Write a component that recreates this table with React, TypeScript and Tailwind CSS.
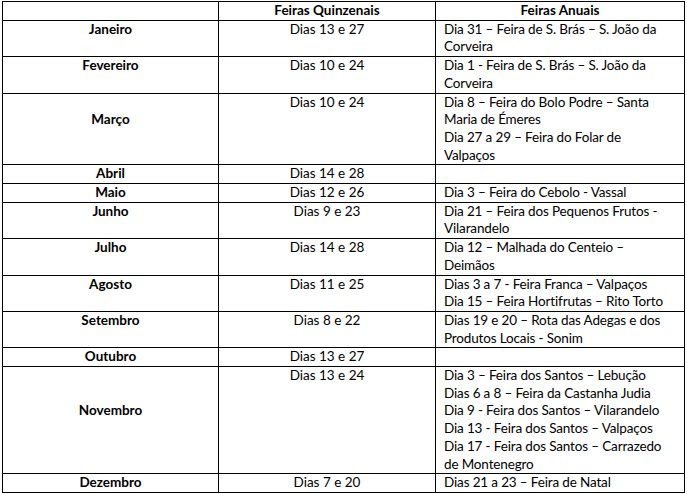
import React from 'react';

type Row = {
  month: string;
  quinzenais: string;
  anuais: string[];
  monthPad?: string;
};

// each entry in anuais is one printed line of the cell
const rows: Row[] = [
  { month: 'Janeiro', quinzenais: 'Dias 13 e 27', anuais: ['Dia 31 – Feira de S. Brás – S. João da', 'Corveira'] },
  { month: 'Fevereiro', quinzenais: 'Dias 10 e 24', anuais: ['Dia 1 - Feira de S. Brás – S. João da', 'Corveira'] },
  {
    month: 'Março',
    quinzenais: 'Dias 10 e 24',
    anuais: ['Dia 8 – Feira do Bolo Podre – Santa', 'Maria de Émeres', 'Dia 27 a 29 – Feira do Folar de', 'Valpaços'],
    monthPad: 'pt-[17.7px]'
  },
  { month: 'Abril', quinzenais: 'Dias 14 e 28', anuais: [] },
  { month: 'Maio', quinzenais: 'Dias 12 e 26', anuais: ['Dia 3 – Feira do Cebolo - Vassal'] },
  { month: 'Junho', quinzenais: 'Dias 9 e 23', anuais: ['Dia 21 – Feira dos Pequenos Frutos -', 'Vilarandelo'] },
  { month: 'Julho', quinzenais: 'Dias 14 e 28', anuais: ['Dia 12 – Malhada do Centeio –', 'Deimãos'] },
  {
    month: 'Agosto',
    quinzenais: 'Dias 11 e 25',
    anuais: ['Dias 3 a 7 - Feira Franca – Valpaços', 'Dia 15 – Feira Hortifrutas – Rito Torto']
  },
  { month: 'Setembro', quinzenais: 'Dias 8 e 22', anuais: ['Dias 19 e 20 – Rota das Adegas e dos', 'Produtos Locais - Sonim'] },
  { month: 'Outubro', quinzenais: 'Dias 13 e 27', anuais: [] },
  {
    month: 'Novembro',
    quinzenais: 'Dias 13 e 24',
    anuais: [
      'Dia 3 – Feira dos Santos – Lebução',
      'Dias 6 a 8 – Feira da Castanha Judia',
      'Dia 9 - Feira dos Santos – Vilarandelo',
      'Dia 13 - Feira dos Santos – Valpaços',
      'Dia 17 - Feira dos Santos – Carrazedo',
      'de Montenegro'
    ],
    monthPad: 'pt-[35.4px]'
  },
  { month: 'Dezembro', quinzenais: 'Dias 7 e 20', anuais: ['Dias 21 a 23 – Feira de Natal'] }
];

export default function App() {
  return (
    <div className="w-[687px] h-[494px] bg-white pt-[1px] pl-[2px] font-['Lato','Liberation_Sans',sans-serif] text-[13.5px] leading-[17.7px] text-black">
      <table className="border-collapse table-fixed w-[682px]">
        <colgroup>
          <col className="w-[216px]" />
          <col className="w-[217px]" />
          <col className="w-[249px]" />
        </colgroup>
        <thead>
          <tr>
            <th className="border border-black p-0 font-bold text-center"></th>
            <th className="border border-black p-0 font-bold text-center">Feiras Quinzenais</th>
            <th className="border border-black p-0 font-bold text-center">Feiras Anuais</th>
          </tr>
        </thead>
        <tbody>
          {rows.map((row) => (
            <tr key={row.month}>
              <td className={`border border-black p-0 align-top text-center font-bold ${row.monthPad ?? ''}`}>
                {row.month}
              </td>
              <td className="border border-black p-0 align-top text-center">{row.quinzenais}</td>
              <td className="border border-black py-0 pl-[8px] pr-[4px] align-top whitespace-nowrap tracking-[-0.15px]">
                {row.anuais.length === 0 ? <>&nbsp;</> : row.anuais.map((a) => <div key={a}>{a}</div>)}
              </td>
            </tr>
          ))}
        </tbody>
      </table>
    </div>
  );
}
